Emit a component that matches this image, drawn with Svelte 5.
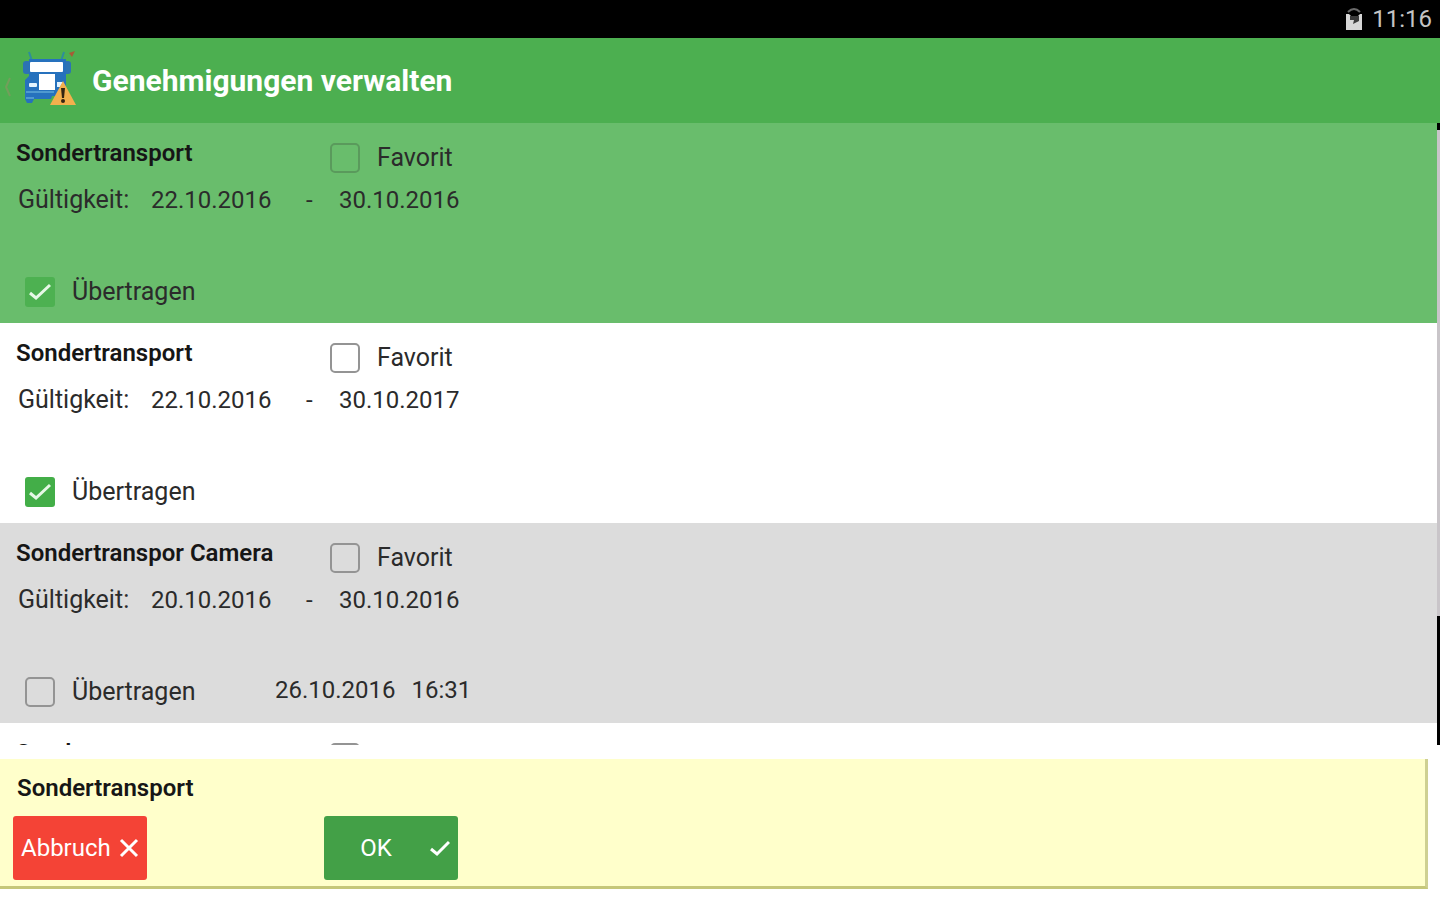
<script>
  let permits = $state([
    { id: 1, title: 'Sondertransport', from: '22.10.2016', to: '30.10.2016', favorite: false, transfer: true, sent: null, tone: 'selected' },
    { id: 2, title: 'Sondertransport', from: '22.10.2016', to: '30.10.2017', favorite: false, transfer: true, sent: null, tone: 'plain' },
    { id: 3, title: 'Sondertranspor Camera', from: '20.10.2016', to: '30.10.2016', favorite: false, transfer: false, sent: { date: '26.10.2016', time: '16:31' }, tone: 'muted' },
    { id: 4, title: 'Sondertransport', from: '22.10.2016', to: '30.10.2016', favorite: false, transfer: false, sent: null, tone: 'plain' }
  ]);
</script>

{#snippet tick()}
  <svg class="tick" viewBox="0 0 30 30" aria-hidden="true">
    <path d="M5 16 L11 21 L25 8" />
  </svg>
{/snippet}

<div class="screen">
  <div class="status">
    <svg class="battery" viewBox="0 0 20 24" aria-hidden="true">
      <path d="M4 5 Q10 -1 16 5" fill="none" stroke="#6b6b6b" stroke-width="2" />
      <path d="M2 7 H5 L7 9 H14 L16 7 H18 V23 H2 Z" fill="#d6d6d6" />
      <path d="M6 9 H15 V14 L9 17 L10 13 H6 Z" fill="#3a3a3a" />
    </svg>
    <span>11:16</span>
  </div>

  <header>
    <svg class="back" viewBox="0 0 8 24" aria-hidden="true">
      <path d="M6 3 L2 12 L6 21" />
    </svg>
    <svg class="logo" viewBox="0 0 56 56" aria-hidden="true">
      <path d="M9 2 L12 11 M44 2 L41 11" fill="none" stroke="#2d8d9c" stroke-width="2" />
      <path d="M49 3 L55 1 L52 7 Z" fill="#a85b35" />
      <rect x="3" y="11" width="8" height="13" rx="3" fill="#2c73b4" />
      <rect x="43" y="11" width="8" height="13" rx="3" fill="#2c73b4" />
      <path d="M9 9 H46 V46 H32 L31 49 H14 L12 53 H7 L5 49 V30 L9 26 Z" fill="#2671bd" />
      <rect x="10" y="12" width="33" height="10" rx="1" fill="#fff" />
      <rect x="19" y="24" width="16" height="16" fill="#fff" />
      <rect x="9" y="33" width="8" height="4" rx="1" fill="#e3f3ff" />
      <path d="M37 32 H43 L40 37 H37 Z" fill="#e3f3ff" />
      <path d="M6 42 H34" stroke="#4f99d0" stroke-width="2" />
      <path d="M6 48 H14" stroke="#4f99d0" stroke-width="2" />
      <path d="M43 31 L56 55 H30 Z" fill="#f3b04d" />
      <path d="M41 38 H45 L44 48 H42 Z" fill="#342412" />
      <circle cx="43" cy="51" r="2" fill="#342412" />
    </svg>
    <h1>Genehmigungen verwalten</h1>
  </header>

  <main>
    <ul>
      {#each permits as permit (permit.id)}
        <li class={permit.tone}>
          <div class="top">
            <h2>{permit.title}</h2>
            <label class="favorite">
              <span class="box">
                <input type="checkbox" bind:checked={permit.favorite} />
                {@render tick()}
              </span>
              Favorit
            </label>
          </div>
          <div class="validity">
            <span class="caption">Gültigkeit:</span>
            <span class="from">{permit.from}</span>
            <span class="dash">-</span>
            <span>{permit.to}</span>
          </div>
          <div class="bottom">
            <label class="transfer">
              <span class="box">
                <input type="checkbox" bind:checked={permit.transfer} />
                {@render tick()}
              </span>
              Übertragen
            </label>
            {#if permit.sent}
              <div class="sent">
                <span>{permit.sent.date}</span>
                <span>{permit.sent.time}</span>
              </div>
            {/if}
          </div>
        </li>
      {/each}
    </ul>
    <div class="track"><div class="thumb"></div></div>
  </main>

  <footer>
    <h2>Sondertransport</h2>
    <div class="actions">
      <button class="cancel" type="button">
        Abbruch
        <svg viewBox="0 0 20 20" aria-hidden="true"><path d="M2 2 L18 18 M18 2 L2 18" /></svg>
      </button>
      <button class="ok" type="button">
        <span>OK</span>
        <svg viewBox="0 0 20 20" aria-hidden="true"><path d="M1 11 L7 16 L19 4" /></svg>
      </button>
    </div>
  </footer>
</div>

<style>
  :global(body) {
    margin: 0;
    background: #fff;
  }

  .screen {
    display: flex;
    flex-direction: column;
    height: 100vh;
    overflow: hidden;
    font-family: Roboto, "Noto Sans", sans-serif;
    font-size: 24px;
    line-height: 28px;
    color: #2b2b2b;
  }

  .status {
    display: flex;
    flex: none;
    align-items: center;
    justify-content: flex-end;
    gap: 8px;
    height: 38px;
    padding-right: 8px;
    background: #000;
    color: #c4c4c4;
  }

  .battery {
    width: 20px;
    height: 24px;
  }

  header {
    display: flex;
    flex: none;
    align-items: center;
    height: 85px;
    padding-left: 4px;
    background: #4caf50;
    color: #fff;
  }

  .back {
    width: 8px;
    height: 24px;
    margin: 12px 8px 0 0;
    fill: none;
    stroke: #739f5b;
    stroke-width: 2;
  }

  .logo {
    width: 56px;
    height: 56px;
    margin: 0 16px 6px 0;
  }

  h1,
  h2 {
    margin: 0;
    font-weight: 700;
  }

  h1 {
    font-size: 30px;
    line-height: 36px;
  }

  h2 {
    color: #161616;
    font-size: 24px;
    font-weight: 600;
    line-height: 28px;
  }

  main {
    display: flex;
    flex: 1;
    min-height: 0;
    overflow: hidden;
  }

  ul {
    flex: 1;
    margin: 0;
    padding: 0;
    list-style: none;
  }

  li {
    padding: 16px 16px 15px;
  }

  .selected {
    background: #69bd6c;
  }

  .plain {
    background: #fff;
  }

  .muted {
    background: #dcdcdc;
  }

  .top {
    display: grid;
    grid-template-columns: 313px 1fr;
    align-items: start;
  }

  label {
    display: flex;
    align-items: center;
    justify-self: start;
    font-size: 25px;
  }

  .favorite {
    gap: 16px;
    min-height: 38px;
  }

  .transfer {
    gap: 16px;
    width: 251px;
    min-height: 32px;
  }

  .box {
    display: grid;
    width: 32px;
    height: 32px;
    place-items: center;
  }

  .box > :global(*) {
    grid-area: 1 / 1;
  }

  input {
    box-sizing: border-box;
    width: 30px;
    height: 30px;
    margin: 0;
    appearance: none;
    border: 2px solid #949494;
    border-radius: 5px;
  }

  .selected input {
    border-color: #5a9a5c;
  }

  input:checked {
    border: 0;
    border-radius: 3px;
    background: #43ae48;
  }

  .selected input:checked {
    background: #4db151;
  }

  .tick {
    width: 30px;
    height: 30px;
    fill: none;
    stroke: #e6f8e6;
    stroke-width: 3;
    pointer-events: none;
    visibility: hidden;
  }

  input:checked + .tick {
    visibility: visible;
  }

  .validity {
    display: flex;
    padding-left: 2px;
    line-height: 46px;
  }

  .caption {
    width: 133px;
    font-size: 25px;
  }

  .from {
    width: 155px;
  }

  .dash {
    width: 33px;
  }

  .bottom {
    display: flex;
    margin-top: 53px;
    padding-left: 8px;
  }

  .sent {
    display: flex;
    gap: 16px;
  }

  .track {
    display: flex;
    flex-direction: column;
    width: 3px;
    padding-top: 7px;
    background: #000;
  }

  .thumb {
    height: 79%;
    background: #c9c5c9;
  }

  footer {
    flex: none;
    margin: 14px 12px 11px 0;
    padding: 15px 13px 6px;
    border-right: 3px solid #ced092;
    border-bottom: 3px solid #c5c779;
    background: #ffffcb;
  }

  footer h2 {
    padding-left: 4px;
  }

  .actions {
    display: flex;
    gap: 177px;
    margin-top: 14px;
  }

  button {
    display: flex;
    align-items: center;
    width: 134px;
    height: 64px;
    padding: 0 8px;
    border: 0;
    border-radius: 3px;
    color: #fff;
    font: inherit;
  }

  button svg {
    width: 20px;
    height: 20px;
    fill: none;
    stroke: #fff;
    stroke-width: 3;
  }

  .cancel {
    justify-content: space-between;
    background: #f44336;
  }

  .ok {
    background: #43a047;
  }

  .ok span {
    flex: 1;
    padding-right: 10px;
    text-align: center;
  }
</style>
